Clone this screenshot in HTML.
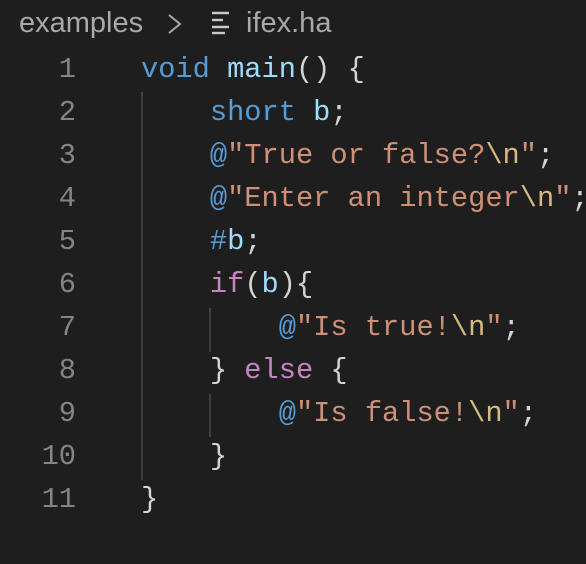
<!DOCTYPE html>
<html><head><style>
html,body{margin:0;padding:0;background:#1e1e1e;width:586px;height:556px;overflow:hidden}
.bc{position:absolute;top:4px;left:19px;font:29px "Liberation Sans",sans-serif;color:#a9a9a9;white-space:pre;line-height:38px}
.code{position:absolute;top:48px;left:0;font:28.7px "Liberation Mono",monospace;line-height:43px;white-space:pre;color:#d4d4d4}
.ln{position:absolute;left:0;width:76px;text-align:right;color:#858585}
.tx{position:absolute;left:141px}
.k{color:#569cd6}.f{color:#9cdcfe}.v{color:#9cdcfe}.s{color:#ce9178}.e{color:#d7ba7d}.c{color:#c586c0}
.g{position:absolute;width:2px;background:#404040}
</style></head><body>
<div class="bc">examples</div>
<svg style="position:absolute;left:166px;top:12px" width="18" height="24"><polyline points="3,3 14,12 3,21" fill="none" stroke="#a9a9a9" stroke-width="2"/></svg>
<svg style="position:absolute;left:210px;top:10px" width="22" height="26"><g stroke="#c8c8c8" stroke-width="2.4"><line x1="2" y1="3" x2="19" y2="3"/><line x1="2" y1="10" x2="13" y2="10"/><line x1="2" y1="17" x2="19" y2="17"/><line x1="2" y1="23" x2="15" y2="23"/></g></svg>
<div class="bc" style="left:246px">ifex.ha</div>
<div class="g" style="left:141px;top:92px;height:388px"></div>
<div class="g" style="left:209px;top:308px;height:44px"></div>
<div class="g" style="left:209px;top:394px;height:43px"></div>
<div class="code">
<div class="ln" style="top:0">1</div><div class="tx" style="top:0"><span class="k">void</span> <span class="f">main</span>() {</div>
<div class="ln" style="top:43px">2</div><div class="tx" style="top:43px">    <span class="k">short</span> <span class="v">b</span>;</div>
<div class="ln" style="top:86px">3</div><div class="tx" style="top:86px">    <span class="k">@</span><span class="s">"True or false?</span><span class="e">\n</span><span class="s">"</span>;</div>
<div class="ln" style="top:129px">4</div><div class="tx" style="top:129px">    <span class="k">@</span><span class="s">"Enter an integer</span><span class="e">\n</span><span class="s">"</span>;</div>
<div class="ln" style="top:172px">5</div><div class="tx" style="top:172px">    <span class="k">#</span><span class="v">b</span>;</div>
<div class="ln" style="top:215px">6</div><div class="tx" style="top:215px">    <span class="c">if</span>(<span class="v">b</span>){</div>
<div class="ln" style="top:258px">7</div><div class="tx" style="top:258px">        <span class="k">@</span><span class="s">"Is true!</span><span class="e">\n</span><span class="s">"</span>;</div>
<div class="ln" style="top:301px">8</div><div class="tx" style="top:301px">    } <span class="c">else</span> {</div>
<div class="ln" style="top:344px">9</div><div class="tx" style="top:344px">        <span class="k">@</span><span class="s">"Is false!</span><span class="e">\n</span><span class="s">"</span>;</div>
<div class="ln" style="top:387px">10</div><div class="tx" style="top:387px">    }</div>
<div class="ln" style="top:430px">11</div><div class="tx" style="top:430px">}</div>
</div>
</body></html>
